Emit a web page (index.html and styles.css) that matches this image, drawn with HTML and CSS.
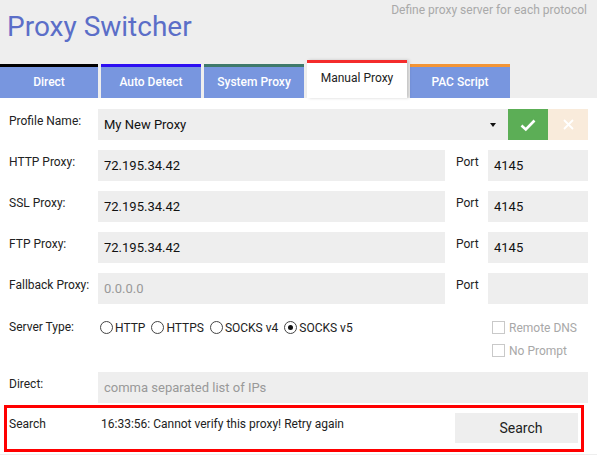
FILE: index.html
```html
<!DOCTYPE html>
<html>
<head>
<meta charset="utf-8">
<title>Proxy Switcher</title>
<link rel="stylesheet" href="styles.css">
</head>
<body>
<header class="header">
  <h1 class="title">Proxy Switcher</h1>
  <p class="subtitle">Define proxy server for each protocol</p>
</header>
<nav class="tabs">
  <div class="tab tab-direct">Direct</div>
  <div class="tab tab-auto">Auto Detect</div>
  <div class="tab tab-system">System Proxy</div>
  <div class="tab tab-manual tab-active">Manual Proxy</div>
  <div class="tab tab-pac">PAC Script</div>
</nav>
<main class="panel">
  <div class="form">
    <div class="label">Profile Name:</div>
    <div class="profile">
      <div class="select"><span>My New Proxy</span><span class="caret"></span></div>
      <div class="btn btn-ok">
        <svg width="16" height="14" viewBox="0 0 16 14"><path d="M1.5 7.5 L5.8 11.5 L14.5 2.5" fill="none" stroke="#fff" stroke-width="2.6"/></svg>
      </div>
      <div class="btn btn-cancel">
        <svg width="11" height="11" viewBox="0 0 11 11"><path d="M1 1 L10 10 M10 1 L1 10" fill="none" stroke="#fff" stroke-width="1.8"/></svg>
      </div>
    </div>

    <div class="label">HTTP Proxy:</div>
    <div class="field">72.195.34.42</div>
    <div class="port-label">Port</div>
    <div class="field">4145</div>

    <div class="label">SSL Proxy:</div>
    <div class="field">72.195.34.42</div>
    <div class="port-label">Port</div>
    <div class="field">4145</div>

    <div class="label">FTP Proxy:</div>
    <div class="field">72.195.34.42</div>
    <div class="port-label">Port</div>
    <div class="field">4145</div>

    <div class="label">Fallback Proxy:</div>
    <div class="field placeholder">0.0.0.0</div>
    <div class="port-label">Port</div>
    <div class="field"></div>

    <div class="label label-server">Server Type:</div>
    <div class="radios">
      <label class="radio"><span class="dot"></span>HTTP</label>
      <label class="radio"><span class="dot"></span>HTTPS</label>
      <label class="radio"><span class="dot"></span>SOCKS v4</label>
      <label class="radio"><span class="dot dot-on"></span>SOCKS v5</label>
    </div>
    <div class="checks">
      <label class="check"><span class="box"></span>Remote DNS</label>
      <label class="check"><span class="box"></span>No Prompt</label>
    </div>

    <div class="label">Direct:</div>
    <div class="field field-wide placeholder">comma separated list of IPs</div>
  </div>

  <div class="search">
    <div class="search-label">Search</div>
    <div class="search-msg">16:33:56: Cannot verify this proxy! Retry again</div>
    <div class="search-btn">Search</div>
  </div>
</main>
</body>
</html>
```

FILE: styles.css
```css
* {
  box-sizing: border-box;
}

html,
body {
  margin: 0;
  padding: 0;
}

body {
  background: #eeeeee;
  font-family: Roboto, "Liberation Sans", sans-serif;
  color: #222;
  width: 597px;
  height: 455px;
  overflow: hidden;
}

.header {
  height: 60px;
  display: flex;
  justify-content: space-between;
  align-items: flex-start;
  padding: 0 10px 0 7px;
}

.title {
  margin: 13px 0 0;
  font-size: 28px;
  line-height: 28px;
  font-weight: 400;
  color: #5b6ec8;
}

.subtitle {
  margin: 3px 0 0;
  font-size: 12px;
  line-height: 14px;
  color: #a9a9a9;
}

.tabs {
  display: flex;
  gap: 3px;
  align-items: flex-end;
  height: 38px;
}

.tab {
  width: 100px;
  height: 34px;
  background: #7896df;
  color: #fff;
  font-size: 12px;
  font-weight: 500;
  line-height: 14px;
  text-align: center;
  padding-top: 8px;
  border-top: 3px solid #000;
}

.tab-direct {
  width: 98px;
  border-top-color: #000;
}

.tab-auto {
  border-top-color: #2d0ff2;
}

.tab-system {
  border-top-color: #3f7a6b;
}

.tab-pac {
  border-top-color: #f39536;
}

.tab-active {
  height: 38px;
  background: #fff;
  color: #222;
  font-weight: 400;
  border-top-color: #f42b2b;
  box-shadow: 2px 0 3px rgba(0, 0, 0, 0.18);
  position: relative;
  z-index: 1;
}

.panel {
  background: #fff;
  padding-top: 11px;
  padding-bottom: 1px;
}

.form {
  display: grid;
  grid-template-columns: 98px 347px 43px 100px;
  grid-template-rows: repeat(5, 31px) 48px 31px;
  row-gap: 10px;
}

.label {
  padding: 5px 0 0 9px;
  font-size: 12px;
  line-height: 14px;
}

.port-label {
  padding: 5px 0 0 11px;
  font-size: 12px;
  line-height: 14px;
}

.field {
  background: #eeeeee;
  font-size: 13px;
  color: #111;
  padding-left: 6px;
  display: flex;
  align-items: center;
}

.field-wide {
  grid-column: 2 / 5;
}

.placeholder {
  color: #999;
}

.profile {
  grid-column: 2 / 5;
  display: flex;
}

.select {
  flex: 1;
  background: #eeeeee;
  font-size: 13px;
  color: #111;
  display: flex;
  align-items: center;
  justify-content: space-between;
  padding: 0 12px 0 6px;
}

.caret {
  width: 0;
  height: 0;
  border-left: 3px solid transparent;
  border-right: 3px solid transparent;
  border-top: 4px solid #111;
}

.btn {
  width: 40px;
  display: flex;
  align-items: center;
  justify-content: center;
}

.btn-ok {
  background: #5cae56;
}

.btn-cancel {
  background: #f9ebdb;
}

.label-server {
  padding-top: 6px;
}

.radios {
  display: flex;
  align-items: center;
  align-self: start;
  margin-top: 7px;
  padding-left: 2px;
  height: 13px;
  font-size: 12px;
  color: #222;
}

.radio {
  display: flex;
  align-items: center;
  gap: 2px;
  margin-right: 6px;
}

.dot {
  width: 13px;
  height: 13px;
  border: 1px solid #444;
  border-radius: 50%;
  display: flex;
  align-items: center;
  justify-content: center;
}

.dot-on::after {
  content: "";
  width: 5px;
  height: 5px;
  border-radius: 50%;
  background: #111;
}

.checks {
  grid-column: 3 / 5;
  padding: 7px 0 0 47px;
  display: flex;
  flex-direction: column;
  gap: 10px;
  font-size: 12px;
  color: #a8a8a8;
}

.check {
  display: flex;
  align-items: center;
  gap: 4px;
  height: 13px;
  white-space: nowrap;
}

.box {
  width: 13px;
  height: 13px;
  border: 1px solid #c9c9c9;
  background: #fff;
  flex: none;
}

.search {
  margin: 2px 13px 1px 4px;
  height: 47px;
  border: 3px solid #ff0000;
  display: grid;
  grid-template-columns: 92px 1fr 123px;
  padding: 5px 3px 6px 2px;
  font-size: 12px;
  line-height: 14px;
}

.search-label,
.search-msg {
  padding-top: 4px;
}

.search-btn {
  background: #eeeeee;
  font-size: 14px;
  color: #222;
  padding-left: 9px;
  display: flex;
  align-items: center;
  justify-content: center;
}
```
